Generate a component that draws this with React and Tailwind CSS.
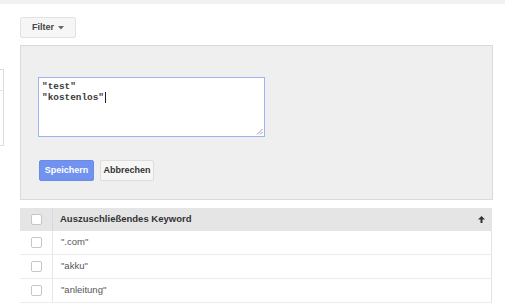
import React from "react";

function Checkbox() {
  return <div className="w-[11px] h-[11px] border border-[#c6c6c6] rounded-[2px] bg-white" />;
}

function Row({ text }) {
  return (
    <div className="flex h-[24px] border-b border-[#ececec] bg-white">
      <div className="w-[33px] flex items-center justify-center border-r border-[#e6e6e6]">
        <Checkbox />
      </div>
      <div className="flex items-center pl-[8px] text-[9.5px] text-[#555]">{text}</div>
    </div>
  );
}

export default function App() {
  return (
    <div className="w-[506px] h-[303px] overflow-hidden bg-white" style={{ fontFamily: '"Liberation Sans", Arial, sans-serif' }}>
      <div className="h-[4px] w-[505px] bg-[#f1f1f1]" />
      <div className="flex">
        <div className="w-[20px]">
          <div className="mt-[65px] w-[4px] h-[77px] border-r border-y border-[#dcdcdc] bg-white flex flex-col">
            <div className="h-[21px] border-b border-[#e3e3e3]" />
          </div>
        </div>
        <div className="w-[473px]">
          <div className="mt-[13px] w-[56px] h-[21px] rounded-[2px] border border-[#e2e2e2] bg-[#f6f6f6] flex items-center justify-center gap-[4px] text-[9px] font-bold text-[#444]">
            <span>Filter</span>
            <svg width="6" height="4" viewBox="0 0 6 4"><path d="M0 0h6L3 3.5z" fill="#666" /></svg>
          </div>
          <div className="mt-[7px] h-[155px] border border-[#dadada] bg-[#efefef] pl-[17px] pt-[31px]">
            <div className="relative w-[227px] h-[60px] border border-[#9fb3f2] bg-white px-[3px] pt-[3px] text-[9.4px] leading-[11px] font-bold text-[#3a3a3a]" style={{ fontFamily: '"Liberation Mono", "Courier New", monospace' }}>
              <div>"test"</div>
              <div className="flex items-center">"kostenlos"<span className="inline-block w-[1px] h-[11px] bg-[#222] ml-[1px]" /></div>
              <svg className="absolute right-[1px] bottom-[1px]" width="7" height="7" viewBox="0 0 7 7">
                <path d="M6.5 1L1 6.5M6.5 4L4 6.5" stroke="#999" strokeWidth="1" />
              </svg>
            </div>
            <div className="mt-[23px] ml-[1px] flex gap-[6px]">
              <div className="w-[55px] h-[21px] rounded-[2px] bg-[#7193ef] border border-[#6a8be8] flex items-center justify-center text-[9px] font-bold text-white">Speichern</div>
              <div className="w-[54px] h-[21px] rounded-[2px] bg-[#f6f6f6] border border-[#dedede] flex items-center justify-center text-[9px] font-bold text-[#333]">Abbrechen</div>
            </div>
          </div>
          <div className="mt-[8px] w-[472px] border-r border-[#e3e3e3]">
            <div className="flex h-[23px] bg-[#e5e5e5]">
              <div className="w-[33px] flex items-center justify-center border-r border-[#d8d8d8]">
                <Checkbox />
              </div>
              <div className="flex-1 flex items-center pl-[7px] text-[9.5px] font-bold text-[#333]">Auszuschließendes Keyword</div>
              <div className="w-[20px] flex items-center justify-center">
                <svg width="7" height="7" viewBox="0 0 7 7"><path d="M3.5 0L7 3.5H4.5V7h-2V3.5H0z" fill="#333" /></svg>
              </div>
            </div>
            <Row text={'".com"'} />
            <Row text={'"akku"'} />
            <Row text={'"anleitung"'} />
          </div>
        </div>
      </div>
    </div>
  );
}
